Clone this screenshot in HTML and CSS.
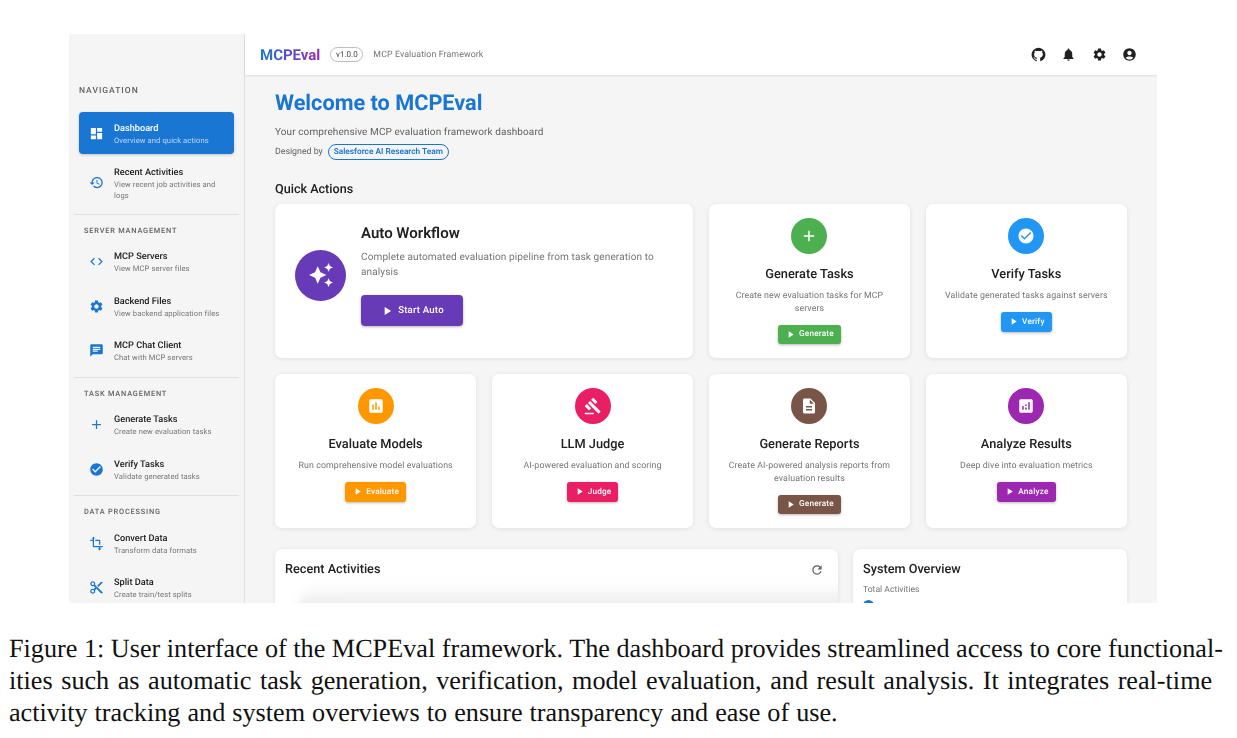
FILE: index.html
```html
<!DOCTYPE html>
<html lang="en">
<head>
<meta charset="utf-8">
<title>MCPEval</title>
<link rel="stylesheet" href="styles.css">
</head>
<body>
<svg class="defs" aria-hidden="true">
<symbol id="i-dash" viewBox="0 0 24 24"><path d="M3 13h8V3H3v10zm0 8h8v-6H3v6zm10 0h8V11h-8v10zm0-18v6h8V3h-8z"/></symbol>
<symbol id="i-hist" viewBox="0 0 24 24"><path d="M13 3c-4.97 0-9 4.03-9 9H1l3.89 3.89.07.14L9 12H6c0-3.87 3.13-7 7-7s7 3.13 7 7-3.13 7-7 7c-1.93 0-3.68-.79-4.94-2.06l-1.42 1.42C8.27 19.99 10.51 21 13 21c4.97 0 9-4.03 9-9s-4.03-9-9-9zm-1 5v5l4.28 2.54.72-1.21-3.5-2.08V8H12z"/></symbol>
<symbol id="i-code" viewBox="0 0 24 24"><path d="M9.4 16.6L4.8 12l4.6-4.6L8 6l-6 6 6 6 1.4-1.4zm5.2 0l4.6-4.6-4.6-4.6L16 6l6 6-6 6-1.4-1.4z"/></symbol>
<symbol id="i-gear" viewBox="0 0 24 24"><path d="M19.14 12.94c.04-.3.06-.61.06-.94 0-.32-.02-.64-.07-.94l2.03-1.58c.18-.14.23-.41.12-.61l-1.92-3.32c-.12-.22-.37-.29-.59-.22l-2.39.96c-.5-.38-1.03-.7-1.62-.94l-.36-2.54c-.04-.24-.24-.41-.48-.41h-3.84c-.24 0-.43.17-.47.41l-.36 2.54c-.59.24-1.13.57-1.62.94l-2.39-.96c-.22-.08-.47 0-.59.22L2.74 8.87c-.12.21-.08.47.12.61l2.03 1.58c-.05.3-.09.63-.09.94s.02.64.07.94l-2.03 1.58c-.18.14-.23.41-.12.61l1.92 3.32c.12.22.37.29.59.22l2.39-.96c.5.38 1.03.7 1.62.94l.36 2.54c.05.24.24.41.48.41h3.84c.24 0 .44-.17.47-.41l.36-2.54c.59-.24 1.13-.56 1.62-.94l2.39.96c.22.08.47 0 .59-.22l1.92-3.32c.12-.22.07-.47-.12-.61l-2.01-1.58zM12 15.6c-1.98 0-3.6-1.62-3.6-3.6s1.62-3.6 3.6-3.6 3.6 1.62 3.6 3.6-1.62 3.6-3.6 3.6z"/></symbol>
<symbol id="i-chat" viewBox="0 0 24 24"><path d="M20 2H4c-1.1 0-1.99.9-1.99 2L2 22l4-4h14c1.1 0 2-.9 2-2V4c0-1.1-.9-2-2-2zM6 9h12v2H6V9zm8 5H6v-2h8v2zm4-6H6V6h12v2z"/></symbol>
<symbol id="i-add" viewBox="0 0 24 24"><path d="M19 13h-6v6h-2v-6H5v-2h6V5h2v6h6v2z"/></symbol>
<symbol id="i-check" viewBox="0 0 24 24"><path d="M12 2C6.48 2 2 6.48 2 12s4.48 10 10 10 10-4.48 10-10S17.52 2 12 2zm-2 15l-5-5 1.41-1.41L10 14.17l7.59-7.59L19 8l-9 9z"/></symbol>
<symbol id="i-crop" viewBox="0 0 24 24"><path d="M22 18v-2H8V4h2L7 1 4 4h2v2H2v2h4v8c0 1.1.9 2 2 2h8v2h-2l3 3 3-3h-2v-2h4zM10 8h6v6h2V8c0-1.1-.9-2-2-2h-6v2z"/></symbol>
<symbol id="i-cut" viewBox="0 0 24 24"><path d="M9.64 7.64c.23-.5.36-1.05.36-1.64 0-2.21-1.79-4-4-4S2 3.79 2 6s1.79 4 4 4c.59 0 1.14-.13 1.64-.36L10 12l-2.36 2.36C7.14 14.13 6.59 14 6 14c-2.21 0-4 1.79-4 4s1.79 4 4 4 4-1.79 4-4c0-.59-.13-1.14-.36-1.64L12 14l7 7h3v-1L9.64 7.64zM6 8c-1.1 0-2-.89-2-2s.9-2 2-2 2 .89 2 2-.9 2-2 2zm0 12c-1.1 0-2-.89-2-2s.9-2 2-2 2 .89 2 2-.9 2-2 2zm6-7.5c-.28 0-.5-.22-.5-.5s.22-.5.5-.5.5.22.5.5-.22.5-.5.5zM19 3l-6 6 2 2 7-7V3z"/></symbol>
<symbol id="i-spark" viewBox="0 0 24 24"><path d="M19 9l1.25-2.75L23 5l-2.75-1.25L19 1l-1.25 2.75L15 5l2.75 1.25zm-7.5.5L9 4 6.5 9.5 1 12l5.5 2.5L9 20l2.5-5.5L17 12zM19 15l-1.25 2.75L15 19l2.75 1.25L19 23l1.25-2.75L23 19l-2.75-1.25z"/></symbol>
<symbol id="i-play" viewBox="0 0 24 24"><path d="M8 5v14l11-7z"/></symbol>
<symbol id="i-assess" viewBox="0 0 24 24"><path d="M19 3H5c-1.1 0-2 .9-2 2v14c0 1.1.9 2 2 2h14c1.1 0 2-.9 2-2V5c0-1.1-.9-2-2-2zM9 17H7v-7h2v7zm4 0h-2V7h2v10zm4 0h-2v-4h2v4z"/></symbol>
<symbol id="i-gavel" viewBox="0 0 24 24"><path d="M1 21h12v2H1zM5.245 8.07l2.83-2.827 14.14 14.142-2.828 2.828zM12.317 1l5.657 5.656-2.83 2.83-5.654-5.66zM3.825 9.485l5.657 5.657-2.828 2.828-5.657-5.657z"/></symbol>
<symbol id="i-doc" viewBox="0 0 24 24"><path d="M14 2H6c-1.1 0-1.99.9-1.99 2L4 20c0 1.1.89 2 1.99 2H18c1.1 0 2-.9 2-2V8l-6-6zm2 16H8v-2h8v2zm0-4H8v-2h8v2zm-3-5V3.5L18.5 9H13z"/></symbol>
<symbol id="i-analytics" viewBox="0 0 24 24"><path d="M19 3H5c-1.1 0-2 .9-2 2v14c0 1.1.9 2 2 2h14c1.1 0 2-.9 2-2V5c0-1.1-.9-2-2-2zM9 17H7v-5h2v5zm4 0h-2v-3h2v3zm0-5h-2v-2h2v2zm4 5h-2V7h2v10z"/></symbol>
<symbol id="i-bell" viewBox="0 0 24 24"><path d="M12 22c1.1 0 2-.9 2-2h-4c0 1.1.89 2 2 2zm6-6v-5c0-3.07-1.64-5.64-4.5-6.32V4c0-.83-.67-1.5-1.5-1.5s-1.5.67-1.5 1.5v.68C7.63 5.36 6 7.92 6 11v5l-2 2v1h16v-1l-2-2z"/></symbol>
<symbol id="i-user" viewBox="0 0 24 24"><path d="M12 2C6.48 2 2 6.48 2 12s4.48 10 10 10 10-4.48 10-10S17.52 2 12 2zm0 4c1.93 0 3.5 1.57 3.5 3.5S13.93 13 12 13s-3.5-1.57-3.5-3.5S10.07 6 12 6zm0 14c-2.03 0-4.43-.82-6.14-2.88C7.55 15.8 9.68 15 12 15s4.45.8 6.14 2.12C16.43 19.18 14.03 20 12 20z"/></symbol>
<symbol id="i-github" viewBox="0 0 24 24"><path d="M12 1.27a11 11 0 00-3.48 21.46c.55.09.73-.28.73-.55v-1.84c-3.03.64-3.67-1.46-3.67-1.46-.55-1.29-1.28-1.65-1.28-1.65-.92-.65.1-.65.1-.65 1.1 0 1.73 1.1 1.73 1.1.92 1.65 2.57 1.2 3.21.92a2 2 0 01.64-1.47c-2.47-.27-5.04-1.19-5.04-5.5 0-1.1.46-2.1 1.2-2.84a3.76 3.76 0 010-2.93s.91-.28 3.11 1.1c1.8-.49 3.7-.49 5.5 0 2.1-1.38 3.02-1.1 3.02-1.1a3.76 3.76 0 010 2.93c.83.74 1.2 1.74 1.2 2.94 0 4.21-2.57 5.13-5.04 5.4.45.37.82.92.82 2.02v3.03c0 .27.1.64.73.55A11 11 0 0012 1.27"/></symbol>
<symbol id="i-refresh" viewBox="0 0 24 24"><path d="M17.65 6.35C16.2 4.9 14.21 4 12 4c-4.42 0-7.99 3.58-7.99 8s3.57 8 7.99 8c3.73 0 6.84-2.55 7.73-6h-2.08c-.82 2.33-3.04 4-5.65 4-3.31 0-6-2.69-6-6s2.69-6 6-6c1.66 0 3.14.69 4.22 1.78L13 11h7V4l-2.35 2.35z"/></symbol>
</svg>

<div class="app">
  <aside class="sidebar">
    <div class="nav-title">NAVIGATION</div>
    <a class="item active"><svg class="nav-icon"><use href="#i-dash"/></svg><span class="item-text"><b>Dashboard</b><small>Overview and quick actions</small></span></a>
    <a class="item tall"><svg class="nav-icon"><use href="#i-hist"/></svg><span class="item-text narrow"><b>Recent Activities</b><small>View recent job activities and logs</small></span></a>
    <hr class="rule">
    <div class="group-title">SERVER MANAGEMENT</div>
    <a class="item"><svg class="nav-icon"><use href="#i-code"/></svg><span class="item-text"><b>MCP Servers</b><small>View MCP server files</small></span></a>
    <a class="item"><svg class="nav-icon"><use href="#i-gear"/></svg><span class="item-text"><b>Backend Files</b><small>View backend application files</small></span></a>
    <a class="item"><svg class="nav-icon"><use href="#i-chat"/></svg><span class="item-text"><b>MCP Chat Client</b><small>Chat with MCP servers</small></span></a>
    <hr class="rule">
    <div class="group-title">TASK MANAGEMENT</div>
    <a class="item"><svg class="nav-icon"><use href="#i-add"/></svg><span class="item-text"><b>Generate Tasks</b><small>Create new evaluation tasks</small></span></a>
    <a class="item"><svg class="nav-icon"><use href="#i-check"/></svg><span class="item-text"><b>Verify Tasks</b><small>Validate generated tasks</small></span></a>
    <hr class="rule">
    <div class="group-title">DATA PROCESSING</div>
    <a class="item"><svg class="nav-icon"><use href="#i-crop"/></svg><span class="item-text"><b>Convert Data</b><small>Transform data formats</small></span></a>
    <a class="item"><svg class="nav-icon"><use href="#i-cut"/></svg><span class="item-text"><b>Split Data</b><small>Create train/test splits</small></span></a>
  </aside>

  <div class="content">
    <header class="topbar">
      <span class="logo">MCPEval</span>
      <span class="version">v1.0.0</span>
      <span class="tagline">MCP Evaluation Framework</span>
      <span class="top-icons">
        <svg><use href="#i-github"/></svg>
        <svg><use href="#i-bell"/></svg>
        <svg><use href="#i-gear"/></svg>
        <svg><use href="#i-user"/></svg>
      </span>
    </header>

    <main class="main">
      <h1 class="welcome">Welcome to MCPEval</h1>
      <p class="intro">Your comprehensive MCP evaluation framework dashboard</p>
      <div class="credit"><span>Designed by</span><span class="team">Salesforce AI Research Team</span></div>
      <h2 class="section">Quick Actions</h2>

      <div class="actions">
        <section class="card auto">
          <span class="disc disc-auto"><svg><use href="#i-spark"/></svg></span>
          <div class="auto-body">
            <h3>Auto Workflow</h3>
            <p>Complete automated evaluation pipeline from task generation to analysis</p>
            <button class="btn btn-auto"><svg><use href="#i-play"/></svg>Start Auto</button>
          </div>
        </section>
        <section class="card">
          <span class="disc green"><svg class="plus"><use href="#i-add"/></svg></span>
          <h3>Generate Tasks</h3>
          <p>Create new evaluation tasks for MCP servers</p>
          <button class="btn green"><svg><use href="#i-play"/></svg>Generate</button>
        </section>
        <section class="card">
          <span class="disc blue"><svg><use href="#i-check"/></svg></span>
          <h3>Verify Tasks</h3>
          <p>Validate generated tasks against servers</p>
          <button class="btn blue"><svg><use href="#i-play"/></svg>Verify</button>
        </section>
        <section class="card">
          <span class="disc orange"><svg><use href="#i-assess"/></svg></span>
          <h3>Evaluate Models</h3>
          <p>Run comprehensive model evaluations</p>
          <button class="btn orange"><svg><use href="#i-play"/></svg>Evaluate</button>
        </section>
        <section class="card">
          <span class="disc pink"><svg><use href="#i-gavel"/></svg></span>
          <h3>LLM Judge</h3>
          <p>AI-powered evaluation and scoring</p>
          <button class="btn pink"><svg><use href="#i-play"/></svg>Judge</button>
        </section>
        <section class="card">
          <span class="disc brown"><svg><use href="#i-doc"/></svg></span>
          <h3>Generate Reports</h3>
          <p>Create AI-powered analysis reports from evaluation results</p>
          <button class="btn brown"><svg><use href="#i-play"/></svg>Generate</button>
        </section>
        <section class="card">
          <span class="disc purple"><svg><use href="#i-analytics"/></svg></span>
          <h3>Analyze Results</h3>
          <p>Deep dive into evaluation metrics</p>
          <button class="btn purple"><svg><use href="#i-play"/></svg>Analyze</button>
        </section>
      </div>

      <div class="lower">
        <section class="panel">
          <div class="panel-head"><h3>Recent Activities</h3><svg class="refresh"><use href="#i-refresh"/></svg></div>
          <div class="ghost"></div>
        </section>
        <section class="panel">
          <h3>System Overview</h3>
          <div class="stat-label">Total Activities</div>
          <div class="stat-dot"></div>
        </section>
      </div>
    </main>
  </div>
</div>

<div class="caption">
  <span>Figure 1: User interface of the MCPEval framework. The dashboard provides streamlined access to core functional-</span>
  <span class="wide">ities such as automatic task generation, verification, model evaluation, and result analysis. It integrates real-time</span>
  <span class="loose">activity tracking and system overviews to ensure transparency and ease of use.</span>
</div>
</body>
</html>
```

FILE: styles.css
```css
* { box-sizing: border-box; }
html, body { margin: 0; padding: 0; background: #fff; }
body { width: 1237px; height: 738px; overflow: hidden; font-family: Roboto, "Liberation Sans", sans-serif; color: #212121; padding-top: 34px; text-rendering: geometricPrecision; }
.defs { display: none; }
svg { fill: currentColor; display: block; }

.app { display: flex; width: 1088px; height: 569px; margin-left: 69px; overflow: hidden; background: #f5f5f5; filter: blur(.3px); }

.sidebar { width: 176px; flex: none; background: #f5f5f5; border-right: 1px solid #e0e0e0; padding: 51px 10px 0 10px; }
.nav-title { font-size: 8.5px; line-height: 12px; font-weight: 500; letter-spacing: 1px; color: #616161; margin-bottom: 15px; }
.group-title { font-size: 7.4px; line-height: 10px; font-weight: 500; letter-spacing: .8px; color: #616161; padding-left: 5px; margin: 0 0 5px; }
.item { display: flex; align-items: center; width: 155px; height: 42px; margin-bottom: 2.5px; border-radius: 4px; padding-left: 10px; color: #212121; }
.item.tall { height: 52px; }
.nav-icon { width: 15px; height: 15px; color: #1976d2; flex: none; margin-right: 10px; }
.item-text { display: block; min-width: 0; padding-top: 2px; white-space: nowrap; }
.item-text.narrow { white-space: normal; padding-right: 14px; }
.item-text b { display: block; font-size: 9.2px; line-height: 12px; font-weight: 500; }
.item-text small { display: block; font-size: 7.6px; line-height: 11px; color: #757575; letter-spacing: .1px; }
.item.active { background: #1976d2; color: #fff; box-shadow: 0 1px 3px rgba(0,0,0,.2); }
.item.active .nav-icon { color: #fff; }
.item.active small { color: rgba(255,255,255,.7); }
.rule { border: 0; border-top: 1px solid #e0e0e0; margin: 5px -5px 11px; }

.content { flex: 1; min-width: 0; display: flex; flex-direction: column; }
.topbar { height: 41px; flex: none; display: flex; align-items: center; background: #fff; padding: 0 20px 0 15px; box-shadow: 0 1px 2px rgba(0,0,0,.1); position: relative; }
.logo { font-size: 15px; font-weight: 700; background: linear-gradient(90deg, #1976d2, #9c27b0); -webkit-background-clip: text; background-clip: text; color: transparent; }
.version { margin-left: 10px; width: 33px; height: 15px; border: 1px solid #bdbdbd; border-radius: 8px; font-size: 8px; line-height: 13px; text-align: center; color: #424242; }
.tagline { margin-left: 10px; font-size: 8.8px; color: #757575; letter-spacing: .1px; }
.top-icons { margin-left: auto; display: flex; gap: 15.5px; color: #212121; }
.top-icons svg { width: 15px; height: 15px; }

.main { flex: 1; min-height: 0; padding: 0 30px; overflow: hidden; }
.welcome { margin: 15px 0 0; font-size: 21.7px; line-height: 28px; font-weight: 700; color: #1976d2; }
.intro { margin: 8px 0 0; font-size: 10px; line-height: 14px; color: #616161; letter-spacing: .1px; }
.credit { margin-top: 4px; display: flex; align-items: center; gap: 5px; font-size: 8.8px; color: #616161; }
.team { height: 16px; width: 121px; border: 1px solid #1976d2; border-radius: 8px; font-size: 8.3px; line-height: 14px; font-weight: 600; color: #1976d2; text-align: center; white-space: nowrap; }
.section { margin: 22px 0 0; font-size: 12.6px; line-height: 16px; font-weight: 500; color: #212121; }

.actions { display: grid; grid-template-columns: repeat(4, 1fr); grid-auto-rows: 154px; gap: 16px 15.67px; margin-top: 6px; }
.card { background: #fff; border-radius: 7px; box-shadow: 0 1px 5px rgba(0,0,0,.09); padding: 14px 14px 0; display: flex; flex-direction: column; align-items: center; text-align: center; }
.card h3 { margin: 13px 0 0; font-size: 12.8px; line-height: 16px; font-weight: 500; color: #212121; }
.card p { margin: 7px 0 0; font-size: 8.8px; line-height: 12.5px; color: #757575; letter-spacing: .1px; }
.disc { width: 36px; height: 36px; border-radius: 50%; display: flex; align-items: center; justify-content: center; color: #fff; flex: none; }
.disc svg { width: 18px; height: 18px; }
.btn { height: 19.5px; margin-top: 9.5px; padding: 0 7px; border: 0; border-radius: 3px; display: inline-flex; align-items: center; gap: 3px; font-family: inherit; font-size: 8.2px; font-weight: 500; letter-spacing: .2px; color: #fff; box-shadow: 0 1px 3px rgba(0,0,0,.28); text-rendering: geometricPrecision; }
.btn svg { width: 11px; height: 11px; }
.green { background: #4caf50; }
.blue { background: #2196f3; }
.orange { background: #ff9800; }
.pink { background: #e91e63; }
.brown { background: #795548; }
.purple { background: #9c27b0; }

.card.auto { grid-column: span 2; flex-direction: row; align-items: center; padding: 0 20px 12px; text-align: left; }
.disc-auto { width: 51px; height: 51px; background: #673ab7; margin-right: 15px; }
.disc-auto svg { width: 26px; height: 26px; }
.auto-body { flex: 1; min-width: 0; }
.card.auto h3 { margin: 0; font-size: 15px; line-height: 18px; font-weight: 600; }
.card.auto p { margin: 7.5px 0 0; font-size: 10.05px; line-height: 15px; }
.btn-auto { height: 31px; width: 102px; margin-top: 15.5px; background: #673ab7; border-radius: 4px; justify-content: center; gap: 4px; font-size: 9.6px; }
.btn-auto svg { width: 14px; height: 14px; }

.lower { display: grid; grid-template-columns: 563px 274px; gap: 15px; margin-top: 21px; }
.panel { background: #fff; border-radius: 7px 7px 0 0; box-shadow: 0 1px 5px rgba(0,0,0,.09); height: 80px; padding: 13px 10px; overflow: hidden; }
.panel h3 { margin: 0; font-size: 12.7px; line-height: 16px; font-weight: 500; color: #212121; }
.panel-head { display: flex; justify-content: space-between; align-items: center; padding-right: 4px; }
.refresh { width: 14px; height: 14px; color: #616161; }
.ghost { height: 50px; margin: 5px -20px 0 10px; border-radius: 34px 0 0 0; background: linear-gradient(#fff, #e6e6e6 60%); filter: blur(5px); }
.stat-label { margin-top: 6px; font-size: 8.6px; line-height: 12px; color: #757575; }
.stat-dot { width: 11px; height: 11px; margin-top: 4px; border-radius: 50%; background: #1976d2; }

.caption { margin: 30px 0 0 9px; font-family: "Liberation Serif", serif; font-size: 26.2px; line-height: 32px; color: #111; }
.caption span { display: block; white-space: nowrap; }
.caption .wide { word-spacing: 2px; }
.caption .loose { word-spacing: .5px; }
```
